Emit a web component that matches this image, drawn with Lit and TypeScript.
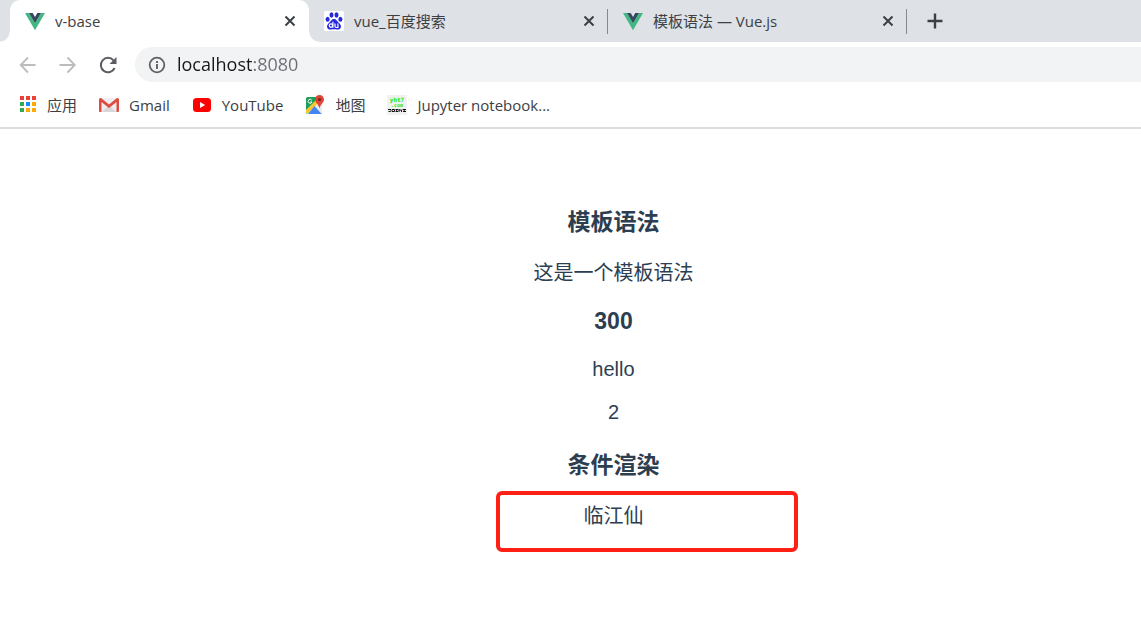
import { LitElement, html, svg, css } from "lit";
import { customElement, property } from "lit/decorators.js";

const icons = {
  vue: svg`<svg viewBox="0 0 20 20" width="20" height="20" aria-hidden="true">
    <path fill="#41b883" d="M0 2h4l6 10.300L16 2h4L10 19.300z"/><path fill="#34495e" d="M4 2h3.700L10 6l2.300-4H16L10 12.300z"/></svg>`,
  baidu: svg`<svg viewBox="0 0 20 20" width="20" height="20" aria-hidden="true">
    <rect width="20" height="20" rx="1.500" fill="#fff"/>
    <g fill="#2529dd"><ellipse cx="3.600" cy="8.200" rx="2" ry="2.500"/><ellipse cx="7.500" cy="4" rx="2" ry="2.700"/>
    <ellipse cx="12.500" cy="4" rx="2" ry="2.700"/><ellipse cx="16.400" cy="8.200" rx="2" ry="2.500"/>
    <path d="M10 8c2.200 0 3 2 4.500 3.400 1.600 1.500 2.900 2.700 2.400 4.800-.5 2.100-2.300 2.500-4.100 2.200-1.900-.3-3.700-.3-5.600 0-1.800.3-3.600-.1-4.100-2.200-.5-2.100.8-3.300 2.400-4.800C7 10 7.800 8 10 8z"/></g>
    <g fill="none" stroke="#fff" stroke-width="1.200"><circle cx="7" cy="14.600" r="1.700"/><path d="M8.900 10.800v6M11 12.600v2.700q0 1.200 1.300 1.200h1.600v-3.900"/></g></svg>`,
  apps: svg`<svg viewBox="0 0 18 18" width="18" height="18" aria-hidden="true">
    <path fill="#ea4335" d="M1 0h4v4H1zM7 0h4v4H7zM13 0h4v4h-4z"/><path fill="#34a853" d="M1 6h4v4H1zM1 12h4v4H1z"/>
    <path fill="#1a8cff" d="M7 6h4v4H7z"/><path fill="#fbab05" d="M13 6h4v4h-4zM7 12h4v4H7zM13 12h4v4h-4z"/></svg>`,
  gmail: svg`<svg viewBox="0 0 20 20" width="20" height="20" aria-hidden="true">
    <path fill="#eee" d="M2 3h16v14H2z"/><path fill="#d8d8d8" d="M3 17l7-7 7 7z"/>
    <path fill="#e04b40" d="M0 4.500Q0 3 1.500 3H2l8 6.500L18 3h.500Q20 3 20 4.500V16q0 1-1 1h-1.500V7L10 13 2.500 7v10H1q-1 0-1-1z"/></svg>`,
  youtube: svg`<svg viewBox="0 0 20 20" width="20" height="20" aria-hidden="true">
    <rect x="1" y="3" width="18" height="14" rx="3.500" fill="#f00"/><path fill="#fff" d="M8 7l5.200 3L8 13z"/></svg>`,
  maps: svg`<svg viewBox="0 0 20 20" width="20" height="20" aria-hidden="true">
    <rect x="1" y="2" width="16" height="17" rx="1.500" fill="#1e9e5a"/><path fill="#e8eaed" d="M1 17L14 4l3 3v11l-1 1H2z"/>
    <path fill="#fbc52d" d="M1 15L13 3l2 3L3 18.500 1 18z"/><path fill="#4385f5" d="M3 19l6.500-8 7 8z"/>
    <path d="M6.800 5.200A2 2 0 1 0 7 7H5.300" stroke="#fff" stroke-width="1" fill="none"/>
    <path fill="#e04436" d="M14.500 0A4.500 4.500 0 0 1 19 4.500c0 3.300-3.300 4-4.500 9-1.200-5-4.500-5.700-4.500-9A4.500 4.500 0 0 1 14.500 0z"/><circle cx="14.500" cy="4.500" r="1.600" fill="#7b231d"/></svg>`,
  yht7: svg`<svg viewBox="0 0 20 20" width="20" height="20" aria-hidden="true"><rect width="20" height="20" fill="#f1f1f1"/>
    <g font-family="DejaVu Sans Mono, monospace" font-weight="700" fill="#0be80b" text-anchor="middle">
    <text x="10" y="7" font-size="6">yht7</text><text x="10" y="12" font-size="5">.com</text></g>
    <path stroke="#111" stroke-width="1" fill="none" d="M1 14.500h3M1.500 16.500h2v-1M5 14.500h2.500v2H5zM8.500 14.500h2.500M9.700 14v3M8.500 16.500h2.500M12 14v3M12 15h2.500v2M15.500 14.500H19M16 16.500h3M17.200 14v3"/></svg>`,
  close: svg`<svg viewBox="0 0 12 12" width="12" height="12" aria-hidden="true"><path d="M1.500 1.500l9 9m0-9l-9 9" stroke="#3c4043" stroke-width="2"/></svg>`,
  plus: svg`<svg viewBox="0 0 16 16" width="16" height="16" aria-hidden="true"><path d="M8 .5v15M.5 8h15" stroke="#3c4043" stroke-width="2.400"/></svg>`,
  back: svg`<svg viewBox="0 0 18 18" width="18" height="18" aria-hidden="true"><path d="M16.500 9H2M9 1.500L1.700 9 9 16.500" fill="none" stroke="#babcbe" stroke-width="1.800"/></svg>`,
  forward: svg`<svg viewBox="0 0 18 18" width="18" height="18" aria-hidden="true"><path d="M.5 9h15M8.500 1.500L15.800 9l-7.300 7.500" fill="none" stroke="#babcbe" stroke-width="1.800"/></svg>`,
  reload: svg`<svg viewBox="0 0 18 18" width="18" height="18" aria-hidden="true"><path d="M15.600 12A7.200 7.200 0 1 1 14.500 4.300" fill="none" stroke="#5a5d61" stroke-width="2"/><path d="M17.500 1v7h-7z" fill="#5a5d61"/></svg>`,
  info: svg`<svg viewBox="0 0 18 18" width="18" height="18" aria-hidden="true"><circle cx="9" cy="9" r="7.300" fill="none" stroke="#5f6368" stroke-width="1.800"/><path d="M9 8v5M9 5v1.900" stroke="#5f6368" stroke-width="1.900"/></svg>`,
};

type IconName = keyof typeof icons;

@customElement("browser-tab")
export class BrowserTab extends LitElement {
  static styles = css`
    :host { display: block; position: relative; flex: 0 1 299px; min-width: 0; }
    .tab { display: flex; align-items: center; gap: 10px; height: 42px; box-sizing: border-box; padding: 0 13px 0 15px; }
    .active { background: #fff; border-radius: 10px 10px 0 0; }
    .active::before, .active::after { content: ""; position: absolute; bottom: 0; width: 10px; height: 10px; }
    .active::before { right: 100%; background: radial-gradient(circle at 0 0, transparent 9px, #fff 10px); }
    .active::after { left: 100%; background: radial-gradient(circle at 100% 0, transparent 9px, #fff 10px); }
    .divided::after { content: ""; position: absolute; right: 0; top: 9px; width: 1px; height: 25px; background: #85888c; }
    svg { display: block; flex: none; }
    .title { flex: 1; min-width: 0; overflow: hidden; white-space: nowrap; font-size: 15px; line-height: 24px; color: #3c4043; }
    .close { display: block; padding: 0; border: 0; background: none; }
  `;
  @property() icon: IconName = "vue";
  @property() label = "";
  @property({ type: Boolean }) active = false;

  render() {
    return html`<div class="tab ${this.active ? "active" : "divided"}">
      ${icons[this.icon]}<span class="title">${this.label}</span>
      <button class="close" aria-label="Close tab">${icons.close}</button>
    </div>`;
  }
}

@customElement("demo-page")
export class DemoPage extends LitElement {
  static styles = css`
    :host { display: block; padding: 78px 0 60px 86px; text-align: center; color: #2c3e50;
      font: 20px/26px "Liberation Sans", "Noto Sans CJK SC", sans-serif; }
    h3 { margin: 0 0 23px; font-size: 23px; line-height: 30px; }
    p { margin: 0 0 20px; }
    .number { margin-bottom: 22px; }
    .value { line-height: 23px; }
    .last { margin-bottom: 26px; }
    .result { position: relative; }
    .mark { position: absolute; left: calc(50% - 118px); top: -12px; width: 302px; height: 61px;
      box-sizing: border-box; border: 4px solid #ff2015; border-radius: 6px; }
  `;

  render() {
    return html`
      <h3>模板语法</h3>
      <p>这是一个模板语法</p>
      <h3 class="number">300</h3>
      <p class="value">hello</p>
      <p class="value last">2</p>
      <h3>条件渲染</h3>
      <div class="result"><p>临江仙</p><div class="mark"></div></div>
    `;
  }
}

@customElement("app-root")
export class AppRoot extends LitElement {
  static styles = css`
    :host { display: block; min-height: 100vh; background: #fff; overflow: hidden;
      font-family: "Open Sans", "Noto Sans CJK SC", sans-serif; }
    svg { display: block; flex: none; }
    button { display: block; padding: 0; border: 0; background: none; }
    .tabs { display: flex; align-items: center; padding-left: 10px; background: #dee1e6; }
    .new-tab { margin-left: 20px; }
    .toolbar { display: flex; align-items: center; gap: 22px; padding: 5px 0 0 19px; }
    .address { display: flex; flex: 1; min-width: 0; align-items: center; gap: 11px; height: 35px; margin-left: -4px;
      padding-left: 13px; background: #f1f3f4; border-radius: 18px 0 0 18px; }
    .url { flex: 1; min-width: 0; height: 35px; padding: 0; border: 0; outline: 0; font: 18px/35px "Open Sans", sans-serif;
      background: linear-gradient(to right, #17181a 76px, #6b6f74 76px); -webkit-background-clip: text; background-clip: text;
      color: #17181a; -webkit-text-fill-color: transparent; }
    .bookmarks { display: flex; align-items: center; gap: 22px; height: 45px; padding-left: 19px; border-bottom: 2px solid #dcdde1; }
    .bookmark { display: flex; align-items: center; gap: 10px; font-size: 15px; line-height: 24px; color: #3c4043;
      text-decoration: none; white-space: nowrap; }
  `;

  private bookmarks: { icon: IconName; label: string }[] = [
    { icon: "apps", label: "应用" },
    { icon: "gmail", label: "Gmail" },
    { icon: "youtube", label: "YouTube" },
    { icon: "maps", label: "地图" },
    { icon: "yht7", label: "Jupyter notebook..." },
  ];

  render() {
    return html`
      <header>
        <div class="tabs">
          <browser-tab icon="vue" label="v-base" active></browser-tab>
          <browser-tab icon="baidu" label="vue_百度搜索"></browser-tab>
          <browser-tab icon="vue" label="模板语法 — Vue.js"></browser-tab>
          <button class="new-tab" aria-label="New tab">${icons.plus}</button>
        </div>
        <div class="toolbar">
          <button aria-label="Back">${icons.back}</button>
          <button aria-label="Forward">${icons.forward}</button>
          <button aria-label="Reload">${icons.reload}</button>
          <div class="address">
            ${icons.info}
            <input class="url" type="text" aria-label="Address" .value=${"localhost:8080"} />
          </div>
        </div>
        <nav class="bookmarks">
          ${this.bookmarks.map((b) => html`<a class="bookmark" href="#">${icons[b.icon]}<span>${b.label}</span></a>`)}
        </nav>
      </header>
      <demo-page></demo-page>
    `;
  }
}
